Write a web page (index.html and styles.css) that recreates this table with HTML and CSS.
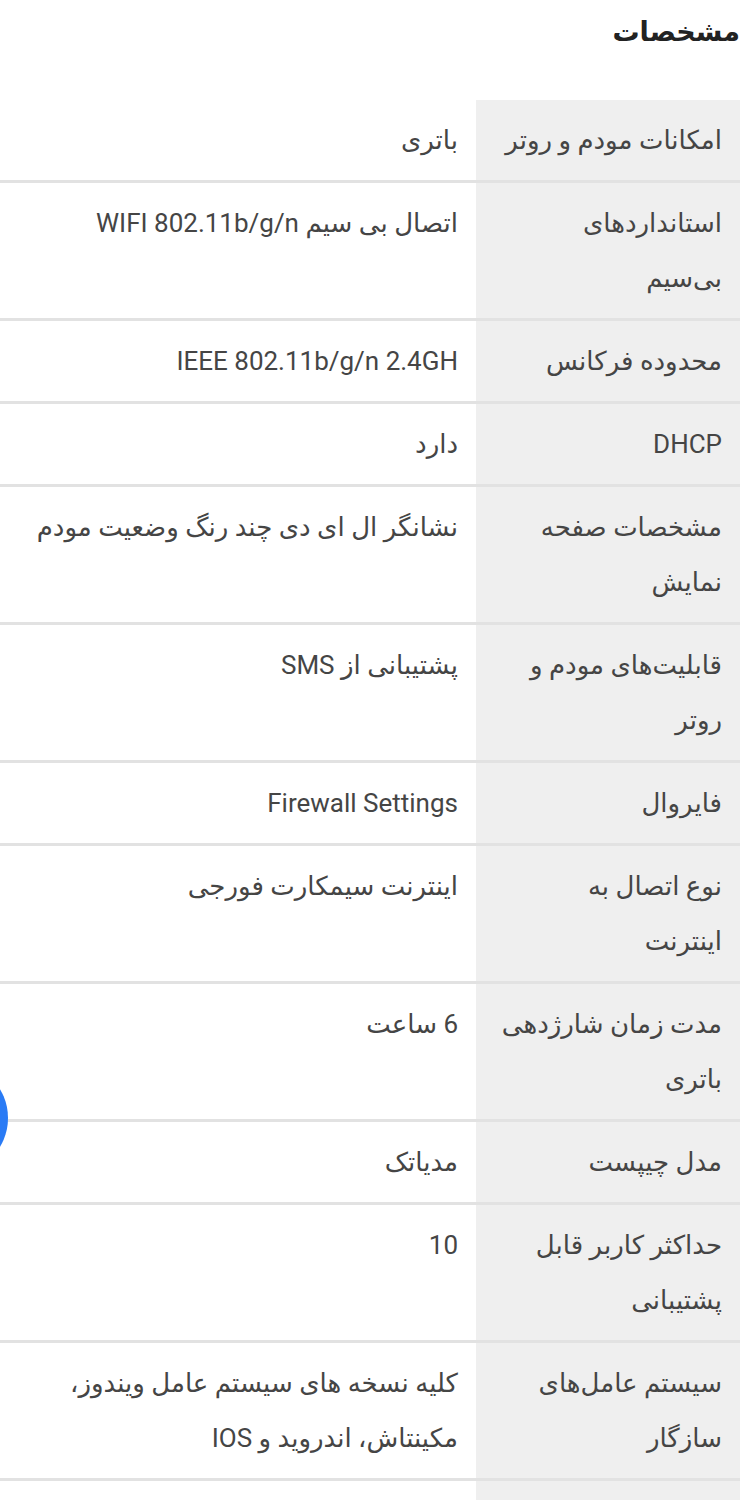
FILE: index.html
```html
<!DOCTYPE html>
<html lang="fa">
<head>
<meta charset="utf-8">
<title>مشخصات</title>
<link rel="stylesheet" href="styles.css">
</head>
<body>
<div class="page" dir="rtl">
  <h2 class="title">مشخصات</h2>
  <div class="specs">
    <div class="row"><div class="label">امکانات مودم و روتر</div><div class="value">باتری</div></div>
    <div class="row"><div class="label">استانداردهای<br>بی‌سیم</div><div class="value">اتصال بی سیم WIFI 802.11b/g/n</div></div>
    <div class="row"><div class="label">محدوده فرکانس</div><div class="value">IEEE 802.11b/g/n 2.4GH</div></div>
    <div class="row"><div class="label">DHCP</div><div class="value">دارد</div></div>
    <div class="row"><div class="label">مشخصات صفحه<br>نمایش</div><div class="value">نشانگر ال ای دی چند رنگ وضعیت مودم</div></div>
    <div class="row"><div class="label">قابلیت‌های مودم و<br>روتر</div><div class="value">پشتیبانی از SMS</div></div>
    <div class="row"><div class="label">فایروال</div><div class="value">Firewall Settings</div></div>
    <div class="row"><div class="label">نوع اتصال به<br>اینترنت</div><div class="value">اینترنت سیمکارت فورجی</div></div>
    <div class="row"><div class="label">مدت زمان شارژدهی<br>باتری</div><div class="value">6 ساعت</div></div>
    <div class="row"><div class="label">مدل چیپست</div><div class="value">مدیاتک</div></div>
    <div class="row"><div class="label">حداکثر کاربر قابل<br>پشتیبانی</div><div class="value">10</div></div>
    <div class="row"><div class="label">سیستم عامل‌های<br>سازگار</div><div class="value">کلیه نسخه های سیستم عامل ویندوز،<br>مکینتاش، اندروید و IOS</div></div>
    <div class="row"><div class="label">&nbsp;</div><div class="value">&nbsp;</div></div>
  </div>
</div>
<div class="fab"></div>
</body>
</html>
```
FILE: styles.css
```css
html, body {
  margin: 0;
  padding: 0;
  background: #ffffff;
}
body {
  font-family: Roboto, "DejaVu Sans", sans-serif;
  color: #454545;
  overflow: hidden;
}
.page {
  direction: rtl;
  width: 740px;
}
.title {
  margin: 0;
  height: 100px;
  box-sizing: border-box;
  padding-top: 12px;
  font-size: 27px;
  font-weight: bold;
  color: #222222;
  line-height: 40px;
}
.specs {
  display: flex;
  flex-direction: column;
}
.row {
  display: grid;
  grid-template-columns: 264px 1fr;
  border-bottom: 3px solid #e2e2e2;
  font-size: 26px;
  line-height: 55px;
}
.label {
  background: #efefef;
  padding: 12.5px 18px 12.5px 6px;
  white-space: nowrap;
}
.value {
  padding: 12.5px 18px 12.5px 0;
  white-space: nowrap;
}
.fab {
  position: absolute;
  left: -104px;
  top: 1062px;
  width: 112px;
  height: 112px;
  border-radius: 50%;
  background: #2a7bf5;
}
```
